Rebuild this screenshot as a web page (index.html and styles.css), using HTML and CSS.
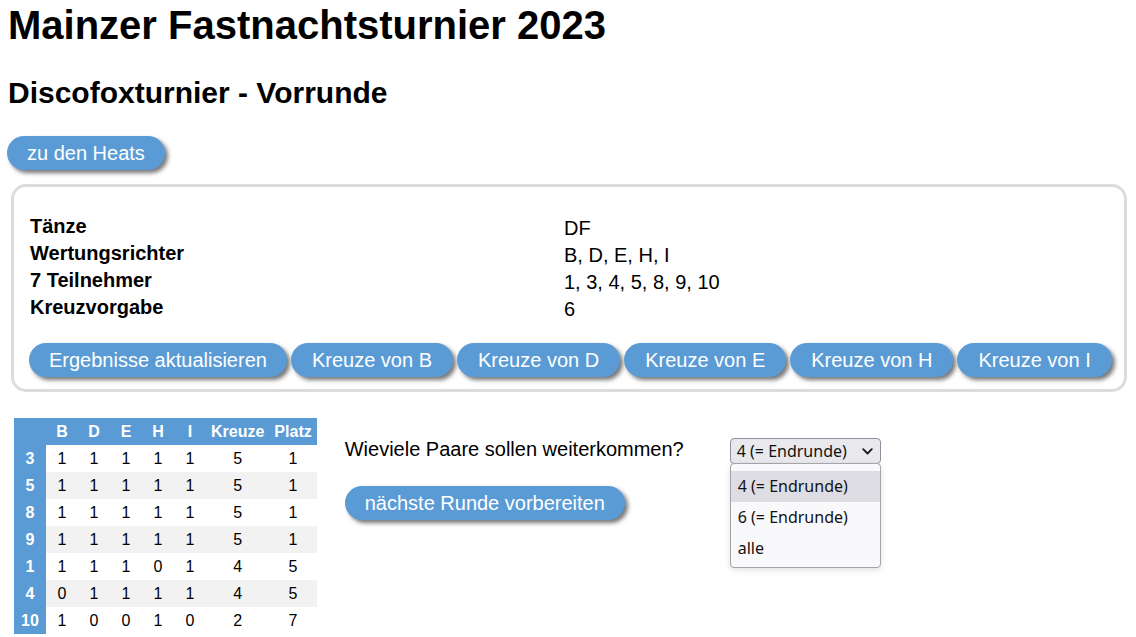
FILE: index.html
```html
<!DOCTYPE html>
<html lang="de">
<head>
<meta charset="utf-8">
<title>Mainzer Fastnachtsturnier 2023</title>
<link rel="stylesheet" href="styles.css">
</head>
<body>
<h1 class="title">Mainzer Fastnachtsturnier 2023</h1>
<h2 class="subtitle">Discofoxturnier - Vorrunde</h2>
<div class="top-actions"><button class="btn">zu den Heats</button></div>
<div class="infobox">
  <div class="info-grid">
    <div class="lbl">Tänze</div><div class="val">DF</div>
    <div class="lbl">Wertungsrichter</div><div class="val">B, D, E, H, I</div>
    <div class="lbl">7 Teilnehmer</div><div class="val">1, 3, 4, 5, 8, 9, 10</div>
    <div class="lbl">Kreuzvorgabe</div><div class="val">6</div>
  </div>
  <div class="btn-row">
    <button class="btn">Ergebnisse aktualisieren</button>
    <button class="btn btn-k">Kreuze von B</button>
    <button class="btn btn-k">Kreuze von D</button>
    <button class="btn btn-k">Kreuze von E</button>
    <button class="btn btn-k">Kreuze von H</button>
    <button class="btn btn-k">Kreuze von I</button>
  </div>
</div>
<div class="lower">
  <table class="results">
    <thead>
      <tr><th></th><th>B</th><th>D</th><th>E</th><th>H</th><th>I</th><th>Kreuze</th><th>Platz</th></tr>
    </thead>
    <tbody>
      <tr><th>3</th><td>1</td><td>1</td><td>1</td><td>1</td><td>1</td><td>5</td><td>1</td></tr>
      <tr><th>5</th><td>1</td><td>1</td><td>1</td><td>1</td><td>1</td><td>5</td><td>1</td></tr>
      <tr><th>8</th><td>1</td><td>1</td><td>1</td><td>1</td><td>1</td><td>5</td><td>1</td></tr>
      <tr><th>9</th><td>1</td><td>1</td><td>1</td><td>1</td><td>1</td><td>5</td><td>1</td></tr>
      <tr><th>1</th><td>1</td><td>1</td><td>1</td><td>0</td><td>1</td><td>4</td><td>5</td></tr>
      <tr><th>4</th><td>0</td><td>1</td><td>1</td><td>1</td><td>1</td><td>4</td><td>5</td></tr>
      <tr><th>10</th><td>1</td><td>0</td><td>0</td><td>1</td><td>0</td><td>2</td><td>7</td></tr>
    </tbody>
  </table>
  <div class="next">
    <div class="question-row">
      <span class="question">Wieviele Paare sollen weiterkommen?</span>
      <div class="select-wrap">
        <div class="select">
          <span>4 (= Endrunde)</span>
          <svg class="chev" width="11" height="7" viewBox="0 0 11 7"><path d="M1.2 1.2 L5.5 5.5 L9.8 1.2" fill="none" stroke="#1a1a1a" stroke-width="1.8" stroke-linecap="round" stroke-linejoin="round"/></svg>
        </div>
        <ul class="options">
          <li class="opt active">4 (= Endrunde)</li>
          <li class="opt">6 (= Endrunde)</li>
          <li class="opt">alle</li>
        </ul>
      </div>
    </div>
    <div class="next-actions"><button class="btn">nächste Runde vorbereiten</button></div>
  </div>
</div>
</body>
</html>
```
FILE: styles.css
```css
html, body {
  margin: 0;
  padding: 0;
  background: #fff;
}
body {
  padding: 0 8px;
  font-family: "Liberation Sans", Arial, sans-serif;
  color: #000;
}
.title {
  font-size: 40px;
  font-weight: bold;
  margin: 0;
  padding-top: 2px;
  line-height: 46px;
}
.subtitle {
  font-size: 30px;
  font-weight: bold;
  margin: 28px 0 0 0;
  line-height: 34px;
}
.top-actions {
  margin-top: 26px;
}
.btn {
  font-family: "Liberation Sans", Arial, sans-serif;
  font-size: 20px;
  color: #fff;
  background: #5b9bd5;
  border: none;
  border-radius: 17px;
  height: 34px;
  padding: 0 20px;
  box-shadow: 3px 3px 4px #777;
  line-height: 34px;
  cursor: pointer;
}
.btn-k {
  padding: 0 21px;
}
.top-actions .btn {
  margin-left: -1px;
}
.infobox {
  margin: 14px 1px 0 3px;
  border: 3px solid #dcdcdc;
  border-radius: 15px;
  padding: 28px 12px 12px 16px;
}
.info-grid {
  display: grid;
  grid-template-columns: 534px 1fr;
  font-size: 20px;
  line-height: 27px;
}
.lbl {
  font-weight: bold;
  margin-top: -2px;
  height: 27px;
}
.val {
  height: 27px;
}
.btn-row {
  display: flex;
  gap: 4px;
  margin-top: 20px;
  margin-left: -1px;
}
.btn-row .btn {
  flex: 0 0 auto;
}
.lower {
  display: flex;
  align-items: flex-start;
  margin-top: 26px;
  margin-left: 6px;
}
.results {
  border-collapse: collapse;
  font-size: 16px;
  flex: 0 0 auto;
}
.results th, .results td {
  height: 27px;
  padding: 0 4px;
  text-align: center;
}
.results thead th {
  background: #5b9bd5;
  color: #fff;
  font-weight: bold;
  height: 27px;
  padding: 0 5px;
}
.results tbody th {
  background: #5b9bd5;
  color: #fff;
  font-weight: bold;
  width: 24px;
}
.results tbody tr:nth-child(even) td {
  background: #f2f2f2;
}
.results td {
  width: 24px;
}
.next {
  margin-left: 28px;
  margin-top: 19px;
}
.question-row {
  display: flex;
  align-items: flex-start;
}
.question {
  font-size: 20px;
  line-height: 24px;
  width: 385px;
  flex: 0 0 auto;
}
.select-wrap {
  position: relative;
  margin-top: 1px;
}
.select {
  box-sizing: border-box;
  width: 151px;
  height: 26px;
  border: 1px solid #8f8f9d;
  border-radius: 4px;
  background: #e9e9ed;
  display: flex;
  align-items: center;
  justify-content: space-between;
  padding: 0 7px 0 6px;
  font-family: "Noto Sans", "Open Sans", sans-serif;
  font-size: 16px;
  color: #111;
}
.chev {
  display: block;
}
.options {
  position: absolute;
  left: 0;
  top: 25px;
  width: 151px;
  box-sizing: border-box;
  margin: 0;
  padding: 7px 0 3px;
  list-style: none;
  background: #f9f9fb;
  border: 1px solid #a3a3a8;
  border-radius: 4px;
  font-family: "Noto Sans", "Open Sans", sans-serif;
  font-size: 16px;
  color: #111;
  box-shadow: 0 2px 6px rgba(0,0,0,0.12);
}
.opt {
  height: 31px;
  line-height: 31px;
  padding-left: 7px;
}
.opt.active {
  background: #dedde3;
}
.next-actions {
  margin-top: 22px;
}
```
